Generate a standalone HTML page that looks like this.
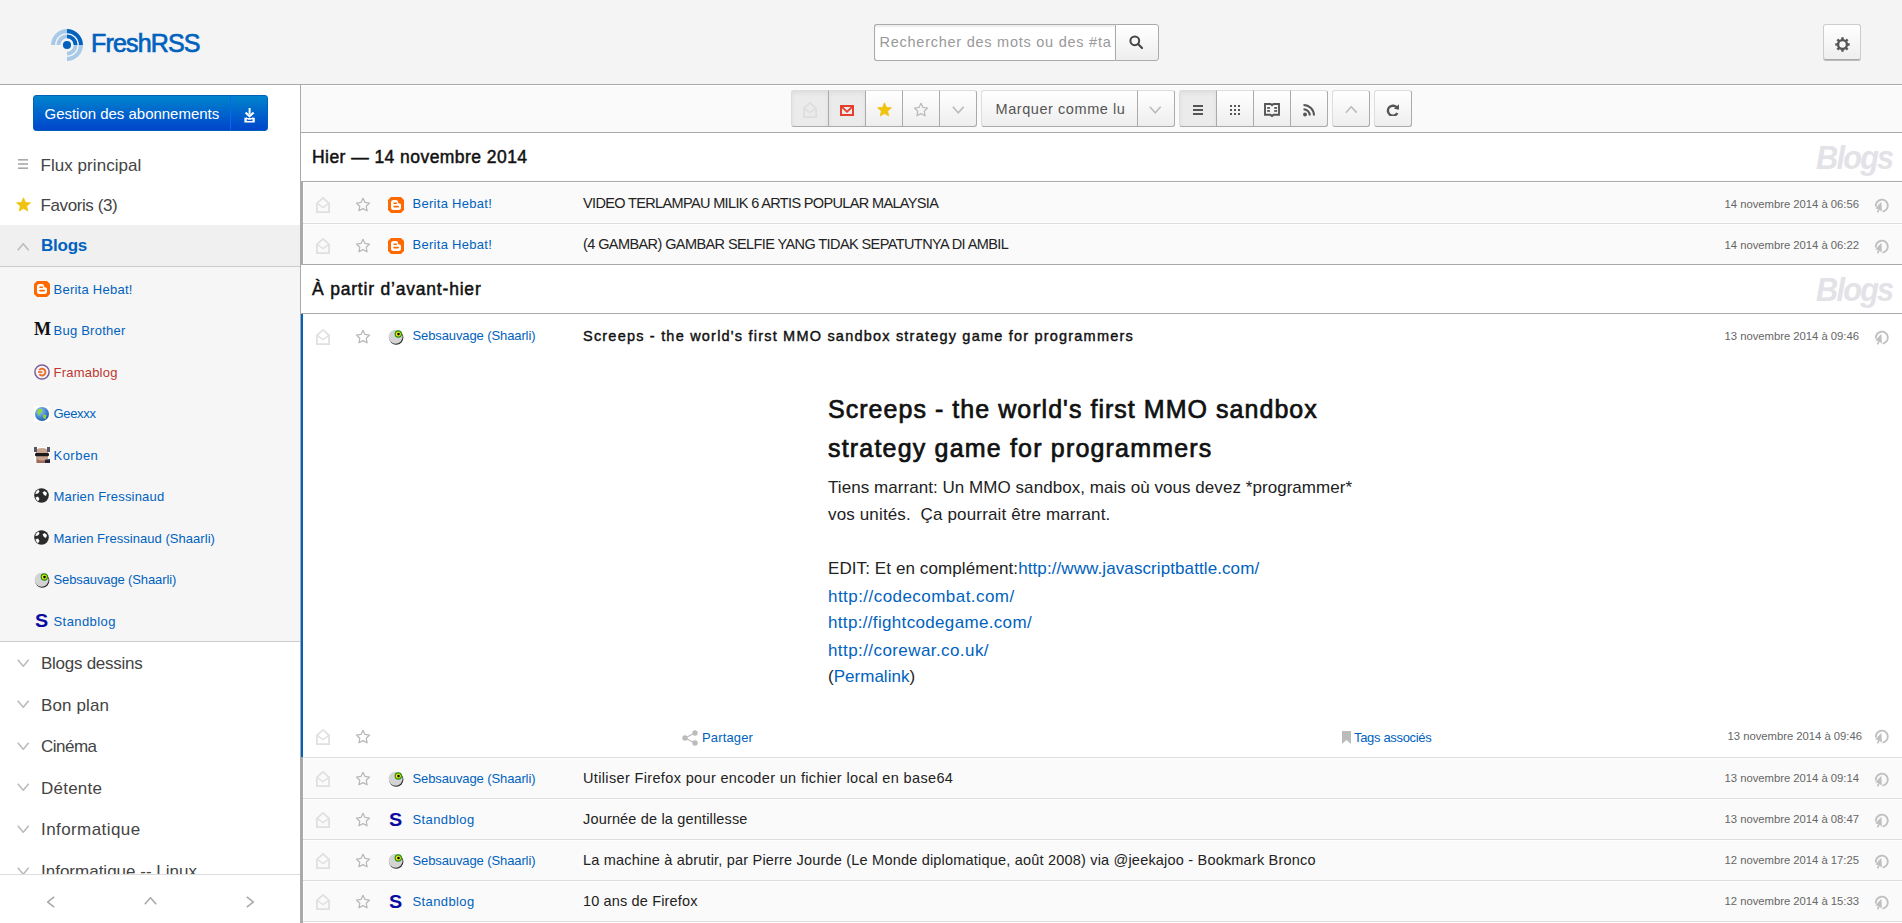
<!DOCTYPE html>
<html><head><meta charset="utf-8"><title>FreshRSS</title>
<style>
html,body{margin:0;padding:0;}
body{width:1902px;height:923px;overflow:hidden;position:relative;background:#fff;font-family:"Liberation Sans", sans-serif;}
body div, body svg{position:absolute;}
.t{white-space:pre;}
</style></head><body>
<div style="left:0px;top:0px;width:1902px;height:84px;background:#f4f4f4;"></div>
<div style="left:0px;top:84px;width:1902px;height:1px;background:#aaa;"></div>
<svg style="left:51px;top:29px;" width="32" height="32" viewBox="0 0 32 32"><circle cx="16" cy="16" r="4.1" fill="#0062be"/><path d="M7.40 16.00A8.6 8.6 0 0 1 16.00 7.40" stroke="#a9c9e9" stroke-width="3.9" fill="none"/><path d="M16.00 7.40A8.6 8.6 0 0 1 24.60 16.00" stroke="#0062be" stroke-width="3.9" fill="none"/><path d="M24.60 16.00A8.6 8.6 0 0 1 16.00 24.60" stroke="#a9c9e9" stroke-width="3.9" fill="none"/><path d="M2.10 16.00A13.9 13.9 0 0 1 16.00 2.10" stroke="#a9c9e9" stroke-width="4.1" fill="none"/><path d="M16.00 2.10A13.9 13.9 0 0 1 29.90 16.00" stroke="#0062be" stroke-width="4.1" fill="none"/><path d="M29.90 16.00A13.9 13.9 0 0 1 16.00 29.90" stroke="#a9c9e9" stroke-width="4.1" fill="none"/></svg>
<div class="t" style="left:91px;top:31.33px;font-size:25px;line-height:25px;color:#0062be;font-weight:400;letter-spacing:-0.828px;font-style:normal;-webkit-text-stroke:0.70px #0062be;">FreshRSS</div>
<div style="left:874px;top:24px;width:241px;height:37px;background:#fff;box-sizing:border-box;border:1px solid #aaa;border-right:none;border-radius:3px 0 0 3px;box-shadow:inset 0 2px 2px #eee;"></div>
<div class="t" style="left:879.5px;top:35.22px;font-size:14.5px;line-height:14.5px;color:#999;font-weight:400;letter-spacing:0.748px;font-style:normal;">Rechercher des mots ou des #ta</div>
<div style="left:1115px;top:24px;width:44px;height:37px;background:linear-gradient(#fff,#eee);box-sizing:border-box;border:1px solid #aaa;border-radius:0 3px 3px 0;"></div>
<svg style="left:1129px;top:35px;" width="14" height="14" viewBox="0 0 14 14"><circle cx="5.8" cy="5.8" r="4.4" fill="none" stroke="#444" stroke-width="2"/><path d="M9 9L13 13" stroke="#444" stroke-width="2.2" stroke-linecap="round"/></svg>
<div style="left:1823px;top:24px;width:38px;height:36px;background:linear-gradient(#fff,#eee);box-sizing:border-box;border:1px solid #ccc;border-bottom-color:#aaa;border-radius:3px;box-shadow:0 1px #bbb;"></div>
<svg style="left:1834.5px;top:36.5px;" width="15" height="15" viewBox="0 0 15 15"><circle cx="7.5" cy="7.5" r="4.4" fill="none" stroke="#555" stroke-width="2.3"/><rect x="6.25" y="0.3" width="2.5" height="3" fill="#555" transform="rotate(0 7.5 7.5)"/><rect x="6.25" y="0.3" width="2.5" height="3" fill="#555" transform="rotate(45 7.5 7.5)"/><rect x="6.25" y="0.3" width="2.5" height="3" fill="#555" transform="rotate(90 7.5 7.5)"/><rect x="6.25" y="0.3" width="2.5" height="3" fill="#555" transform="rotate(135 7.5 7.5)"/><rect x="6.25" y="0.3" width="2.5" height="3" fill="#555" transform="rotate(180 7.5 7.5)"/><rect x="6.25" y="0.3" width="2.5" height="3" fill="#555" transform="rotate(225 7.5 7.5)"/><rect x="6.25" y="0.3" width="2.5" height="3" fill="#555" transform="rotate(270 7.5 7.5)"/><rect x="6.25" y="0.3" width="2.5" height="3" fill="#555" transform="rotate(315 7.5 7.5)"/></svg>
<div style="left:0px;top:85px;width:300px;height:838px;background:#fff;"></div>
<div style="left:300px;top:85px;width:1px;height:838px;background:#aaa;"></div>
<div style="left:33px;top:95px;width:235px;height:36px;background:linear-gradient(#0084cc,#0045cc);box-sizing:border-box;border:1px solid #0062b7;border-radius:3px;"></div>
<div style="left:230px;top:96px;width:1px;height:34px;background:#0a66f0;"></div>
<div class="t" style="left:44.5px;top:106.20px;font-size:15px;line-height:15px;color:#fff;font-weight:400;letter-spacing:-0.018px;font-style:normal;">Gestion des abonnements</div>
<svg style="left:243.5px;top:107.5px;" width="11" height="15" viewBox="0 0 11 15"><rect x="4.6" y="0" width="2" height="6.5" fill="#fff"/><path d="M1.6 4.6L5.6 8.4L9.6 4.6" fill="none" stroke="#fff" stroke-width="2.1"/><path d="M0.4 9.7H1.6L2.4 9.1L3 9.9H8.2L8.8 9.1L9.6 9.7H10.8V14.5H0.4Z" fill="#fff"/><path d="M3.3 11.3V12.4H7.9V11.3" fill="none" stroke="#0857cc" stroke-width="1.2"/></svg>
<svg style="left:18px;top:159px;" width="10" height="10" viewBox="0 0 10 10"><rect x="0" y="0" width="10" height="1.6" fill="#aaa"/><rect x="0" y="4.2" width="10" height="1.6" fill="#aaa"/><rect x="0" y="8.4" width="10" height="1.6" fill="#aaa"/></svg>
<div class="t" style="left:40.5px;top:156.50px;font-size:17px;line-height:17px;color:#444;font-weight:400;letter-spacing:0.051px;font-style:normal;">Flux principal</div>
<svg style="left:15.5px;top:197px;" width="15" height="15" viewBox="0 0 15 15"><path d="M7.50 0.80L9.44 5.43L14.44 5.84L10.64 9.12L11.79 14.01L7.50 11.40L3.21 14.01L4.36 9.12L0.56 5.84L5.56 5.43Z" fill="#f0c30f" stroke="#f0c30f" stroke-width="0.8" stroke-linejoin="round"/></svg>
<div class="t" style="left:40.5px;top:197.00px;font-size:17px;line-height:17px;color:#444;font-weight:400;letter-spacing:-0.400px;font-style:normal;">Favoris (3)</div>
<div style="left:0px;top:225px;width:300px;height:41px;background:#f0f0f0;"></div>
<div style="left:0px;top:266px;width:300px;height:1px;background:#ccc;"></div>
<svg style="left:17px;top:242.5px;" width="12.5" height="8" viewBox="0 0 12.5 8"><path d="M0.8 7.2L6.25 0.8L11.7 7.2" fill="none" stroke="#bbb" stroke-width="1.6"/></svg>
<div class="t" style="left:41px;top:237.40px;font-size:17px;line-height:17px;color:#0062be;font-weight:700;letter-spacing:-0.250px;font-style:normal;">Blogs</div>
<div style="left:0px;top:267px;width:300px;height:374px;background:#f6f6f6;"></div>
<div style="left:0px;top:641px;width:300px;height:1px;background:#ccc;"></div>
<svg style="left:34px;top:281px;" width="16" height="16" viewBox="0 0 16 16"><path d="M3 0H13L16 3V13L13 16H3L0 13V3Z" fill="#ff6a00"/><path d="M3 5.5Q3 3 5.5 3H8Q10 3 10 5Q10 6.5 11.5 6.5Q13 6.5 13 8V10.5Q13 13 10.5 13H5.5Q3 13 3 10.5Z" fill="#fff"/><rect x="5.2" y="5.4" width="4" height="1.6" rx="0.8" fill="#ff6a00"/><rect x="5.2" y="8.8" width="5.8" height="1.6" rx="0.8" fill="#ff6a00"/></svg>
<div class="t" style="left:53.5px;top:282.99px;font-size:13px;line-height:13px;color:#0062be;font-weight:400;letter-spacing:0.250px;font-style:normal;">Berita Hebat!</div>
<div class="t" style="left:33.5px;top:319px;font-family:'Liberation Serif',serif;font-weight:700;font-size:19px;line-height:19px;color:#111;transform:scaleX(0.95);transform-origin:0 0">M</div>
<div class="t" style="left:53.5px;top:324.49px;font-size:13px;line-height:13px;color:#0062be;font-weight:400;letter-spacing:0.240px;font-style:normal;">Bug Brother</div>
<svg style="left:34px;top:364px;" width="16" height="16" viewBox="0 0 16 16"><circle cx="8" cy="8" r="7.1" fill="none" stroke="#7b5e9b" stroke-width="1.5"/><path d="M5.2 6.2A3.4 3.4 0 1 1 5.4 10.2" fill="none" stroke="#ea6e2e" stroke-width="2"/><rect x="4" y="7.2" width="4.4" height="1.7" fill="#ea6e2e"/></svg>
<div class="t" style="left:53.5px;top:365.99px;font-size:13px;line-height:13px;color:#bd362f;font-weight:400;letter-spacing:0.219px;font-style:normal;">Framablog</div>
<svg style="left:34px;top:406px;" width="16" height="16" viewBox="0 0 16 16"><rect width="16" height="16" fill="#fff"/><defs><radialGradient id="gg" cx="0.35" cy="0.3" r="0.8"><stop offset="0" stop-color="#8ec8ff"/><stop offset="1" stop-color="#1450a8"/></radialGradient></defs><circle cx="8" cy="8" r="7" fill="url(#gg)"/><path d="M3.5 4Q6 2 8.5 3.5L8 6L6 7.5L5 10L3.5 7Z" fill="#8fd63a"/><path d="M9 8.5L12.5 9L11.5 13L9.5 12.5Z" fill="#8fd63a"/></svg>
<div class="t" style="left:53.5px;top:407.49px;font-size:13px;line-height:13px;color:#0062be;font-weight:400;letter-spacing:-0.320px;font-style:normal;">Geexxx</div>
<svg style="left:34px;top:447px;" width="16" height="16" viewBox="0 0 16 16"><rect width="16" height="16" fill="#fff"/><path d="M2 16V5Q2 1 8 1Q14 1 14 5V16Z" fill="#c9a48f"/><rect x="1" y="6" width="14" height="3.2" rx="1.2" fill="#1a1a1a"/><path d="M0 0H3V5H0ZM13 0H16V5H13Z" fill="#556"/><path d="M3 12Q8 15 13 12V16H3Z" fill="#a06a5a"/><path d="M11 13L16 12V16H11Z" fill="#223"/></svg>
<div class="t" style="left:53.5px;top:448.99px;font-size:13px;line-height:13px;color:#0062be;font-weight:400;letter-spacing:0.480px;font-style:normal;">Korben</div>
<svg style="left:34px;top:488px;" width="15" height="15" viewBox="0 0 15 15"><circle cx="7.5" cy="7.5" r="7.3" fill="#2b2b2b"/><path d="M1.2 6Q2 3 4.5 1.6L5.5 3.5L4 5.5Z" fill="#fff"/><path d="M8.5 4.5L10.5 3L13 5L12 8L10 7Z" fill="#fff"/><path d="M1.5 9.5L4 8.5L5.5 11L4 13.2Q2 11.8 1.5 9.5Z" fill="#fff"/></svg>
<div class="t" style="left:53.5px;top:490.49px;font-size:13px;line-height:13px;color:#0062be;font-weight:400;letter-spacing:0.188px;font-style:normal;">Marien Fressinaud</div>
<svg style="left:34px;top:530px;" width="15" height="15" viewBox="0 0 15 15"><circle cx="7.5" cy="7.5" r="7.3" fill="#2b2b2b"/><path d="M1.2 6Q2 3 4.5 1.6L5.5 3.5L4 5.5Z" fill="#fff"/><path d="M8.5 4.5L10.5 3L13 5L12 8L10 7Z" fill="#fff"/><path d="M1.5 9.5L4 8.5L5.5 11L4 13.2Q2 11.8 1.5 9.5Z" fill="#fff"/></svg>
<div class="t" style="left:53.5px;top:531.99px;font-size:13px;line-height:13px;color:#0062be;font-weight:400;letter-spacing:0.038px;font-style:normal;">Marien Fressinaud (Shaarli)</div>
<svg style="left:34px;top:572px;" width="16" height="16" viewBox="0 0 16 16"><circle cx="8.2" cy="8.6" r="7.2" fill="#2a2a2a"/><circle cx="7.6" cy="7.7" r="7" fill="#d3d3d3"/><circle cx="10.3" cy="5" r="3.7" fill="#1f8f12"/><circle cx="10.3" cy="5" r="2.5" fill="#f2ec10"/><circle cx="10.5" cy="5.1" r="1.3" fill="#000"/></svg>
<div class="t" style="left:53.5px;top:573.49px;font-size:13px;line-height:13px;color:#0062be;font-weight:400;letter-spacing:-0.118px;font-style:normal;">Sebsauvage (Shaarli)</div>
<div class="t" style="left:35.2px;top:611.4px;font-weight:700;font-size:19px;line-height:19px;color:#0a0aa0;transform:scaleX(1.04);transform-origin:0 0">S</div>
<div class="t" style="left:53.5px;top:614.99px;font-size:13px;line-height:13px;color:#0062be;font-weight:400;letter-spacing:0.425px;font-style:normal;">Standblog</div>
<svg style="left:17px;top:658.5px;" width="12.5" height="8" viewBox="0 0 12.5 8"><path d="M0.8 0.8L6.25 7.2L11.7 0.8" fill="none" stroke="#bbb" stroke-width="1.6"/></svg>
<div class="t" style="left:41px;top:655.00px;font-size:17px;line-height:17px;color:#444;font-weight:400;letter-spacing:-0.263px;font-style:normal;">Blogs dessins</div>
<svg style="left:17px;top:700.1px;" width="12.5" height="8" viewBox="0 0 12.5 8"><path d="M0.8 0.8L6.25 7.2L11.7 0.8" fill="none" stroke="#bbb" stroke-width="1.6"/></svg>
<div class="t" style="left:41px;top:696.60px;font-size:17px;line-height:17px;color:#444;font-weight:400;letter-spacing:0.118px;font-style:normal;">Bon plan</div>
<svg style="left:17px;top:741.7px;" width="12.5" height="8" viewBox="0 0 12.5 8"><path d="M0.8 0.8L6.25 7.2L11.7 0.8" fill="none" stroke="#bbb" stroke-width="1.6"/></svg>
<div class="t" style="left:41px;top:738.20px;font-size:17px;line-height:17px;color:#444;font-weight:400;letter-spacing:-0.520px;font-style:normal;">Cinéma</div>
<svg style="left:17px;top:783.3px;" width="12.5" height="8" viewBox="0 0 12.5 8"><path d="M0.8 0.8L6.25 7.2L11.7 0.8" fill="none" stroke="#bbb" stroke-width="1.6"/></svg>
<div class="t" style="left:41px;top:779.80px;font-size:17px;line-height:17px;color:#444;font-weight:400;letter-spacing:0.234px;font-style:normal;">Détente</div>
<svg style="left:17px;top:824.9px;" width="12.5" height="8" viewBox="0 0 12.5 8"><path d="M0.8 0.8L6.25 7.2L11.7 0.8" fill="none" stroke="#bbb" stroke-width="1.6"/></svg>
<div class="t" style="left:41px;top:821.40px;font-size:17px;line-height:17px;color:#444;font-weight:400;letter-spacing:0.420px;font-style:normal;">Informatique</div>
<svg style="left:17px;top:866.5px;" width="12.5" height="8" viewBox="0 0 12.5 8"><path d="M0.8 0.8L6.25 7.2L11.7 0.8" fill="none" stroke="#bbb" stroke-width="1.6"/></svg>
<div class="t" style="left:41px;top:863.00px;font-size:17px;line-height:17px;color:#444;font-weight:400;letter-spacing:0.000px;font-style:normal;">Informatique -- Linux</div>
<div style="left:0px;top:874px;width:300px;height:49px;background:#fff;"></div>
<div style="left:0px;top:874px;width:300px;height:1px;background:#ddd;"></div>
<svg style="left:46.5px;top:895.5px;" width="8" height="12" viewBox="0 0 8 12"><path d="M7.2 0.8L0.8 6.0L7.2 11.2" fill="none" stroke="#aaa" stroke-width="1.6"/></svg>
<svg style="left:143.5px;top:897px;" width="13" height="8" viewBox="0 0 13 8"><path d="M0.8 7.2L6.5 0.8L12.2 7.2" fill="none" stroke="#aaa" stroke-width="1.6"/></svg>
<svg style="left:246px;top:895.5px;" width="8" height="12" viewBox="0 0 8 12"><path d="M0.8 0.8L7.2 6.0L0.8 11.2" fill="none" stroke="#aaa" stroke-width="1.6"/></svg>
<div style="left:301px;top:85px;width:1601px;height:838px;background:#fff;"></div>
<div style="left:301px;top:85px;width:1601px;height:1px;background:#fff;"></div>
<div style="left:301px;top:86px;width:1601px;height:46px;background:#fafafa;"></div>
<div style="left:301px;top:132px;width:1601px;height:1px;background:#aaa;"></div>
<div style="left:791px;top:90px;width:38px;height:37px;background:#ebebeb;box-sizing:border-box;border:1px solid #ddd;border-right-color:#aaa;border-bottom-color:#aaa;border-radius:3px 0 0 3px;box-shadow:inset 0 2px 4px #ddd;"></div>
<div style="left:829px;top:90px;width:37px;height:37px;background:#ebebeb;box-sizing:border-box;border:1px solid #ddd;border-left:none;border-right-color:#aaa;border-bottom-color:#aaa;box-shadow:inset 0 2px 4px #ddd;"></div>
<div style="left:866px;top:90px;width:37px;height:37px;background:linear-gradient(#fff,#eee);box-sizing:border-box;border:1px solid #ddd;border-left:none;border-right-color:#aaa;border-bottom-color:#aaa;"></div>
<div style="left:903px;top:90px;width:37px;height:37px;background:linear-gradient(#fff,#eee);box-sizing:border-box;border:1px solid #ddd;border-left:none;border-right-color:#aaa;border-bottom-color:#aaa;"></div>
<div style="left:940px;top:90px;width:37px;height:37px;background:linear-gradient(#fff,#eee);box-sizing:border-box;border:1px solid #ddd;border-left:none;border-right-color:#aaa;border-bottom-color:#aaa;border-radius:0 3px 3px 0;"></div>
<svg style="left:803px;top:102px;" width="14" height="16" viewBox="0 0 14 16"><path d="M0.9 15.1V6.3L7 0.9L13.1 6.3V15.1Z" fill="none" stroke="#ddd" stroke-width="1.6" stroke-linejoin="miter"/><path d="M1.8 6.9L7 10.6L12.2 6.9" fill="none" stroke="#ddd" stroke-width="1.3"/></svg>
<svg style="left:840px;top:105px;" width="14" height="11" viewBox="0 0 14 11"><rect x="1" y="1" width="12" height="9" fill="none" stroke="#e6402f" stroke-width="2"/><path d="M1.5 1.5L7 6.8L12.5 1.5" fill="none" stroke="#e6402f" stroke-width="1.8"/></svg>
<svg style="left:876.5px;top:102px;" width="15" height="15" viewBox="0 0 15 15"><path d="M7.50 0.80L9.44 5.43L14.44 5.84L10.64 9.12L11.79 14.01L7.50 11.40L3.21 14.01L4.36 9.12L0.56 5.84L5.56 5.43Z" fill="#f0c30f" stroke="#f0c30f" stroke-width="0.8" stroke-linejoin="round"/></svg>
<svg style="left:913px;top:101.5px;" width="16" height="16" viewBox="0 0 16 16"><path d="M8.00 1.30L10.00 5.45L14.56 6.07L11.23 9.25L12.06 13.78L8.00 11.60L3.94 13.78L4.77 9.25L1.44 6.07L6.00 5.45Z" fill="none" stroke="#bbb" stroke-width="1.25" stroke-linejoin="round"/></svg>
<svg style="left:951.5px;top:106px;" width="12.5" height="7.5" viewBox="0 0 12.5 7.5"><path d="M0.8 0.8L6.25 6.7L11.7 0.8" fill="none" stroke="#bbb" stroke-width="1.6"/></svg>
<div style="left:981px;top:90px;width:157px;height:37px;background:linear-gradient(#fff,#eee);box-sizing:border-box;border:1px solid #ddd;border-right-color:#aaa;border-bottom-color:#aaa;border-radius:3px 0 0 3px;"></div>
<div style="left:1138px;top:90px;width:37px;height:37px;background:linear-gradient(#fff,#eee);box-sizing:border-box;border:1px solid #ddd;border-left:none;border-right-color:#aaa;border-bottom-color:#aaa;border-radius:0 3px 3px 0;"></div>
<div class="t" style="left:995.5px;top:102.22px;font-size:14.5px;line-height:14.5px;color:#555;font-weight:400;letter-spacing:0.566px;font-style:normal;">Marquer comme lu</div>
<svg style="left:1149px;top:106px;" width="12.5" height="7.5" viewBox="0 0 12.5 7.5"><path d="M0.8 0.8L6.25 6.7L11.7 0.8" fill="none" stroke="#bbb" stroke-width="1.6"/></svg>
<div style="left:1179px;top:90px;width:38px;height:37px;background:#ebebeb;box-sizing:border-box;border:1px solid #ddd;border-right-color:#aaa;border-bottom-color:#aaa;border-radius:3px 0 0 3px;box-shadow:inset 0 2px 4px #ddd;"></div>
<div style="left:1217px;top:90px;width:37px;height:37px;background:linear-gradient(#fff,#eee);box-sizing:border-box;border:1px solid #ddd;border-left:none;border-right-color:#aaa;border-bottom-color:#aaa;"></div>
<div style="left:1254px;top:90px;width:37px;height:37px;background:linear-gradient(#fff,#eee);box-sizing:border-box;border:1px solid #ddd;border-left:none;border-right-color:#aaa;border-bottom-color:#aaa;"></div>
<div style="left:1291px;top:90px;width:37px;height:37px;background:linear-gradient(#fff,#eee);box-sizing:border-box;border:1px solid #ddd;border-left:none;border-right-color:#aaa;border-bottom-color:#aaa;border-radius:0 3px 3px 0;"></div>
<svg style="left:1193px;top:105px;" width="10" height="10" viewBox="0 0 10 10"><rect x="0" y="0" width="10" height="2" fill="#555"/><rect x="0" y="4" width="10" height="2" fill="#555"/><rect x="0" y="8" width="10" height="2" fill="#555"/></svg>
<svg style="left:1230px;top:105px;" width="10" height="10" viewBox="0 0 10 10"><rect x="0" y="0" width="2" height="2" fill="#555"/><rect x="0" y="4" width="2" height="2" fill="#555"/><rect x="0" y="8" width="2" height="2" fill="#555"/><rect x="4" y="0" width="2" height="2" fill="#555"/><rect x="4" y="4" width="2" height="2" fill="#555"/><rect x="4" y="8" width="2" height="2" fill="#555"/><rect x="8" y="0" width="2" height="2" fill="#555"/><rect x="8" y="4" width="2" height="2" fill="#555"/><rect x="8" y="8" width="2" height="2" fill="#555"/></svg>
<svg style="left:1264px;top:103px;" width="16" height="14" viewBox="0 0 16 14"><path d="M1 1H6.6L8 2.3L9.4 1H15V11.8H9.4L8 13.2L6.6 11.8H1Z" fill="none" stroke="#555" stroke-width="1.9"/><rect x="3.1" y="4.1" width="2.9" height="1.7" fill="#555"/><rect x="10.2" y="4.1" width="2.9" height="1.7" fill="#555"/><rect x="3.1" y="7.1" width="2.9" height="1.7" fill="#555"/><rect x="10.2" y="7.1" width="2.9" height="1.7" fill="#555"/></svg>
<svg style="left:1303px;top:104px;" width="12" height="13" viewBox="0 0 12 13"><circle cx="2" cy="10.5" r="1.9" fill="#555"/><path d="M0.5 5.2A6.3 6.3 0 0 1 6.8 11.5" fill="none" stroke="#555" stroke-width="2"/><path d="M0.5 1A10.5 10.5 0 0 1 11 11.5" fill="none" stroke="#555" stroke-width="2"/></svg>
<div style="left:1332px;top:90px;width:38px;height:37px;background:linear-gradient(#fff,#eee);box-sizing:border-box;border:1px solid #ddd;border-right-color:#aaa;border-bottom-color:#aaa;border-radius:3px;"></div>
<svg style="left:1344.5px;top:106px;" width="12.5" height="7.5" viewBox="0 0 12.5 7.5"><path d="M0.8 6.7L6.25 0.8L11.7 6.7" fill="none" stroke="#bbb" stroke-width="1.6"/></svg>
<div style="left:1374px;top:90px;width:38px;height:37px;background:linear-gradient(#fff,#eee);box-sizing:border-box;border:1px solid #ddd;border-right-color:#aaa;border-bottom-color:#aaa;border-radius:3px;"></div>
<svg style="left:1386px;top:104px;" width="13" height="12" viewBox="0 0 13 12"><path d="M11.2 4.2A5 5 0 1 0 11.3 9" fill="none" stroke="#555" stroke-width="2.4"/><path d="M8 4.8L13 0.3V5.8Z" fill="#555"/></svg>
<div style="left:301px;top:133px;width:1601px;height:48px;background:#fff;"></div>
<div class="t" style="left:312px;top:149.18px;font-size:17.5px;line-height:17.5px;color:#111;font-weight:400;letter-spacing:0.446px;font-style:normal;-webkit-text-stroke:0.49px #111;">Hier — 14 novembre 2014</div>
<div class="t" style="left:1816px;top:140.86px;font-size:33px;line-height:33px;color:#e2e2e7;font-weight:700;letter-spacing:-1.900px;font-style:italic;transform:scaleX(0.93);transform-origin:0 0;">Blogs</div>
<div style="left:301px;top:181px;width:1601px;height:1px;background:#aaa;"></div>
<div style="left:301px;top:182px;width:2px;height:82px;background:#aaa;"></div>
<div style="left:303px;top:182px;width:1599px;height:1px;background:#fff;"></div>
<div style="left:303px;top:183px;width:1599px;height:39px;background:#fafafa;"></div>
<div style="left:303px;top:183px;width:1px;height:39px;background:#fff;"></div>
<svg style="left:316px;top:197px;" width="14" height="16" viewBox="0 0 14 16"><path d="M0.9 15.1V6.3L7 0.9L13.1 6.3V15.1Z" fill="none" stroke="#e0e0e0" stroke-width="1.8" stroke-linejoin="miter"/><path d="M1.8 6.9L7 10.6L12.2 6.9" fill="none" stroke="#e0e0e0" stroke-width="1.3"/></svg>
<svg style="left:355px;top:197px;" width="16" height="16" viewBox="0 0 16 16"><path d="M8.00 1.30L10.00 5.45L14.56 6.07L11.23 9.25L12.06 13.78L8.00 11.60L3.94 13.78L4.77 9.25L1.44 6.07L6.00 5.45Z" fill="none" stroke="#b8b8b8" stroke-width="1.25" stroke-linejoin="round"/></svg>
<svg style="left:388px;top:197px;" width="16" height="16" viewBox="0 0 16 16"><path d="M3 0H13L16 3V13L13 16H3L0 13V3Z" fill="#ff6a00"/><path d="M3 5.5Q3 3 5.5 3H8Q10 3 10 5Q10 6.5 11.5 6.5Q13 6.5 13 8V10.5Q13 13 10.5 13H5.5Q3 13 3 10.5Z" fill="#fff"/><rect x="5.2" y="5.4" width="4" height="1.6" rx="0.8" fill="#ff6a00"/><rect x="5.2" y="8.8" width="5.8" height="1.6" rx="0.8" fill="#ff6a00"/></svg>
<div class="t" style="left:412.5px;top:196.99px;font-size:13px;line-height:13px;color:#0062be;font-weight:400;letter-spacing:0.286px;font-style:normal;">Berita Hebat!</div>
<div class="t" style="left:583px;top:196.22px;font-size:14.5px;line-height:14.5px;color:#222;font-weight:400;letter-spacing:-0.644px;font-style:normal;">VIDEO TERLAMPAU MILIK 6 ARTIS POPULAR MALAYSIA</div>
<div class="t" style="right:43px;top:198.73px;font-size:11.3px;line-height:11.3px;color:#666;font-weight:400;letter-spacing:-0.027px;font-style:normal;">14 novembre 2014 à 06:56</div>
<svg style="left:1874px;top:198px;" width="16" height="16" viewBox="0 0 16 16"><path d="M1.9 8.6A6 6 0 1 1 8.6 13.6" fill="none" stroke="#c0c0c0" stroke-width="1.9"/><path d="M7.4 3.8L7.9 13.8L5.7 11.8L4.3 14.7L2.8 13.9L4.2 11L1.3 10.5Z" fill="#c0c0c0"/></svg>
<div style="left:303px;top:223px;width:1599px;height:1px;background:#ddd;"></div>
<div style="left:303px;top:224px;width:1599px;height:1px;background:#fff;"></div>
<div style="left:303px;top:225px;width:1599px;height:39px;background:#fafafa;"></div>
<div style="left:303px;top:225px;width:1px;height:39px;background:#fff;"></div>
<svg style="left:316px;top:238px;" width="14" height="16" viewBox="0 0 14 16"><path d="M0.9 15.1V6.3L7 0.9L13.1 6.3V15.1Z" fill="none" stroke="#e0e0e0" stroke-width="1.8" stroke-linejoin="miter"/><path d="M1.8 6.9L7 10.6L12.2 6.9" fill="none" stroke="#e0e0e0" stroke-width="1.3"/></svg>
<svg style="left:355px;top:238px;" width="16" height="16" viewBox="0 0 16 16"><path d="M8.00 1.30L10.00 5.45L14.56 6.07L11.23 9.25L12.06 13.78L8.00 11.60L3.94 13.78L4.77 9.25L1.44 6.07L6.00 5.45Z" fill="none" stroke="#b8b8b8" stroke-width="1.25" stroke-linejoin="round"/></svg>
<svg style="left:388px;top:238px;" width="16" height="16" viewBox="0 0 16 16"><path d="M3 0H13L16 3V13L13 16H3L0 13V3Z" fill="#ff6a00"/><path d="M3 5.5Q3 3 5.5 3H8Q10 3 10 5Q10 6.5 11.5 6.5Q13 6.5 13 8V10.5Q13 13 10.5 13H5.5Q3 13 3 10.5Z" fill="#fff"/><rect x="5.2" y="5.4" width="4" height="1.6" rx="0.8" fill="#ff6a00"/><rect x="5.2" y="8.8" width="5.8" height="1.6" rx="0.8" fill="#ff6a00"/></svg>
<div class="t" style="left:412.5px;top:237.99px;font-size:13px;line-height:13px;color:#0062be;font-weight:400;letter-spacing:0.286px;font-style:normal;">Berita Hebat!</div>
<div class="t" style="left:583px;top:237.22px;font-size:14.5px;line-height:14.5px;color:#222;font-weight:400;letter-spacing:-0.589px;font-style:normal;">(4 GAMBAR) GAMBAR SELFIE YANG TIDAK SEPATUTNYA DI AMBIL</div>
<div class="t" style="right:43px;top:239.73px;font-size:11.3px;line-height:11.3px;color:#666;font-weight:400;letter-spacing:-0.027px;font-style:normal;">14 novembre 2014 à 06:22</div>
<svg style="left:1874px;top:239px;" width="16" height="16" viewBox="0 0 16 16"><path d="M1.9 8.6A6 6 0 1 1 8.6 13.6" fill="none" stroke="#c0c0c0" stroke-width="1.9"/><path d="M7.4 3.8L7.9 13.8L5.7 11.8L4.3 14.7L2.8 13.9L4.2 11L1.3 10.5Z" fill="#c0c0c0"/></svg>
<div style="left:301px;top:264px;width:1601px;height:1px;background:#aaa;"></div>
<div style="left:301px;top:265px;width:1601px;height:48px;background:#fff;"></div>
<div class="t" style="left:312px;top:281.18px;font-size:17.5px;line-height:17.5px;color:#111;font-weight:400;letter-spacing:0.800px;font-style:normal;-webkit-text-stroke:0.49px #111;">À partir d’avant-hier</div>
<div class="t" style="left:1816px;top:272.86px;font-size:33px;line-height:33px;color:#e2e2e7;font-weight:700;letter-spacing:-1.900px;font-style:italic;transform:scaleX(0.93);transform-origin:0 0;">Blogs</div>
<div style="left:301px;top:313px;width:1601px;height:1px;background:#aaa;"></div>
<div style="left:301px;top:314px;width:2px;height:443px;background:#0062be;"></div>
<div style="left:303px;top:314px;width:1599px;height:443px;background:#fff;"></div>
<svg style="left:316px;top:329px;" width="14" height="16" viewBox="0 0 14 16"><path d="M0.9 15.1V6.3L7 0.9L13.1 6.3V15.1Z" fill="none" stroke="#e0e0e0" stroke-width="1.8" stroke-linejoin="miter"/><path d="M1.8 6.9L7 10.6L12.2 6.9" fill="none" stroke="#e0e0e0" stroke-width="1.3"/></svg>
<svg style="left:355px;top:329px;" width="16" height="16" viewBox="0 0 16 16"><path d="M8.00 1.30L10.00 5.45L14.56 6.07L11.23 9.25L12.06 13.78L8.00 11.60L3.94 13.78L4.77 9.25L1.44 6.07L6.00 5.45Z" fill="none" stroke="#b8b8b8" stroke-width="1.25" stroke-linejoin="round"/></svg>
<svg style="left:388px;top:329px;" width="16" height="16" viewBox="0 0 16 16"><circle cx="8.2" cy="8.6" r="7.2" fill="#2a2a2a"/><circle cx="7.6" cy="7.7" r="7" fill="#d3d3d3"/><circle cx="10.3" cy="5" r="3.7" fill="#1f8f12"/><circle cx="10.3" cy="5" r="2.5" fill="#f2ec10"/><circle cx="10.5" cy="5.1" r="1.3" fill="#000"/></svg>
<div class="t" style="left:412.5px;top:328.99px;font-size:13px;line-height:13px;color:#0062be;font-weight:400;letter-spacing:-0.106px;font-style:normal;">Sebsauvage (Shaarli)</div>
<div class="t" style="left:583px;top:328.72px;font-size:14.5px;line-height:14.5px;color:#111;font-weight:400;letter-spacing:1.206px;font-style:normal;-webkit-text-stroke:0.41px #111;">Screeps - the world's first MMO sandbox strategy game for programmers</div>
<div class="t" style="right:43px;top:330.73px;font-size:11.3px;line-height:11.3px;color:#666;font-weight:400;letter-spacing:-0.027px;font-style:normal;">13 novembre 2014 à 09:46</div>
<svg style="left:1874px;top:330px;" width="16" height="16" viewBox="0 0 16 16"><path d="M1.9 8.6A6 6 0 1 1 8.6 13.6" fill="none" stroke="#c0c0c0" stroke-width="1.9"/><path d="M7.4 3.8L7.9 13.8L5.7 11.8L4.3 14.7L2.8 13.9L4.2 11L1.3 10.5Z" fill="#c0c0c0"/></svg>
<div class="t" style="left:828px;top:396.73px;font-size:25px;line-height:25px;color:#111;font-weight:400;letter-spacing:1.037px;font-style:normal;-webkit-text-stroke:0.70px #111;">Screeps - the world's first MMO sandbox</div>
<div class="t" style="left:828px;top:435.63px;font-size:25px;line-height:25px;color:#111;font-weight:400;letter-spacing:1.186px;font-style:normal;-webkit-text-stroke:0.70px #111;">strategy game for programmers</div>
<div class="t" style="left:828px;top:479.00px;font-size:17px;line-height:17px;color:#222;font-weight:400;letter-spacing:0.053px;font-style:normal;">Tiens marrant: Un MMO sandbox, mais où vous devez *programmer*</div>
<div class="t" style="left:828px;top:505.80px;font-size:17px;line-height:17px;color:#222;font-weight:400;letter-spacing:0.147px;font-style:normal;">vos unités.  Ça pourrait être marrant.</div>
<div class="t" style="left:828px;top:560.00px;font-size:17px;line-height:17px;color:#222;font-weight:400;letter-spacing:0.093px;font-style:normal;">EDIT: Et en complément:<span style="color:#0062be">http://www.javascriptbattle.com/</span></div>
<div class="t" style="left:828px;top:587.60px;font-size:17px;line-height:17px;color:#0062be;font-weight:400;letter-spacing:0.452px;font-style:normal;">http://codecombat.com/</div>
<div class="t" style="left:828px;top:614.40px;font-size:17px;line-height:17px;color:#0062be;font-weight:400;letter-spacing:0.333px;font-style:normal;">http://fightcodegame.com/</div>
<div class="t" style="left:828px;top:641.50px;font-size:17px;line-height:17px;color:#0062be;font-weight:400;letter-spacing:0.420px;font-style:normal;">http://corewar.co.uk/</div>
<div class="t" style="left:828px;top:668.30px;font-size:17px;line-height:17px;color:#222;font-weight:400;letter-spacing:0.020px;font-style:normal;">(<span style="color:#0062be">Permalink</span>)</div>
<svg style="left:316px;top:729px;" width="14" height="16" viewBox="0 0 14 16"><path d="M0.9 15.1V6.3L7 0.9L13.1 6.3V15.1Z" fill="none" stroke="#e0e0e0" stroke-width="1.8" stroke-linejoin="miter"/><path d="M1.8 6.9L7 10.6L12.2 6.9" fill="none" stroke="#e0e0e0" stroke-width="1.3"/></svg>
<svg style="left:355px;top:729px;" width="16" height="16" viewBox="0 0 16 16"><path d="M8.00 1.30L10.00 5.45L14.56 6.07L11.23 9.25L12.06 13.78L8.00 11.60L3.94 13.78L4.77 9.25L1.44 6.07L6.00 5.45Z" fill="none" stroke="#b8b8b8" stroke-width="1.25" stroke-linejoin="round"/></svg>
<svg style="left:682px;top:730px;" width="16" height="16" viewBox="0 0 16 16"><circle cx="3" cy="8" r="2.7" fill="#bbb"/><circle cx="13" cy="3" r="2.7" fill="#bbb"/><circle cx="13" cy="13" r="2.7" fill="#bbb"/><path d="M3 8L13 3M3 8L13 13" stroke="#bbb" stroke-width="1.3"/></svg>
<div class="t" style="left:702px;top:731.29px;font-size:13px;line-height:13px;color:#0062be;font-weight:400;letter-spacing:0.143px;font-style:normal;">Partager</div>
<svg style="left:1342px;top:731px;" width="9" height="13" viewBox="0 0 9 13"><path d="M0 0H9V13L4.5 9L0 13Z" fill="#bbb"/></svg>
<div class="t" style="left:1354px;top:731.29px;font-size:13px;line-height:13px;color:#0062be;font-weight:400;letter-spacing:-0.333px;font-style:normal;">Tags associés</div>
<div class="t" style="right:40px;top:731.43px;font-size:11.3px;line-height:11.3px;color:#666;font-weight:400;letter-spacing:-0.027px;font-style:normal;">13 novembre 2014 à 09:46</div>
<svg style="left:1874px;top:729px;" width="16" height="16" viewBox="0 0 16 16"><path d="M1.9 8.6A6 6 0 1 1 8.6 13.6" fill="none" stroke="#c0c0c0" stroke-width="1.9"/><path d="M7.4 3.8L7.9 13.8L5.7 11.8L4.3 14.7L2.8 13.9L4.2 11L1.3 10.5Z" fill="#c0c0c0"/></svg>
<div style="left:303px;top:757px;width:1599px;height:1px;background:#ddd;"></div>
<div style="left:301px;top:757px;width:2px;height:166px;background:#aaa;"></div>
<div style="left:303px;top:758px;width:1599px;height:1px;background:#fff;"></div>
<div style="left:303px;top:759px;width:1599px;height:39px;background:#fafafa;"></div>
<div style="left:303px;top:759px;width:1px;height:39px;background:#fff;"></div>
<svg style="left:316px;top:771px;" width="14" height="16" viewBox="0 0 14 16"><path d="M0.9 15.1V6.3L7 0.9L13.1 6.3V15.1Z" fill="none" stroke="#e0e0e0" stroke-width="1.8" stroke-linejoin="miter"/><path d="M1.8 6.9L7 10.6L12.2 6.9" fill="none" stroke="#e0e0e0" stroke-width="1.3"/></svg>
<svg style="left:355px;top:771px;" width="16" height="16" viewBox="0 0 16 16"><path d="M8.00 1.30L10.00 5.45L14.56 6.07L11.23 9.25L12.06 13.78L8.00 11.60L3.94 13.78L4.77 9.25L1.44 6.07L6.00 5.45Z" fill="none" stroke="#b8b8b8" stroke-width="1.25" stroke-linejoin="round"/></svg>
<svg style="left:388px;top:771px;" width="16" height="16" viewBox="0 0 16 16"><circle cx="8.2" cy="8.6" r="7.2" fill="#2a2a2a"/><circle cx="7.6" cy="7.7" r="7" fill="#d3d3d3"/><circle cx="10.3" cy="5" r="3.7" fill="#1f8f12"/><circle cx="10.3" cy="5" r="2.5" fill="#f2ec10"/><circle cx="10.5" cy="5.1" r="1.3" fill="#000"/></svg>
<div class="t" style="left:412.5px;top:771.99px;font-size:13px;line-height:13px;color:#0062be;font-weight:400;letter-spacing:-0.106px;font-style:normal;">Sebsauvage (Shaarli)</div>
<div class="t" style="left:583px;top:771.22px;font-size:14.5px;line-height:14.5px;color:#222;font-weight:400;letter-spacing:0.351px;font-style:normal;">Utiliser Firefox pour encoder un fichier local en base64</div>
<div class="t" style="right:43px;top:772.93px;font-size:11.3px;line-height:11.3px;color:#666;font-weight:400;letter-spacing:-0.027px;font-style:normal;">13 novembre 2014 à 09:14</div>
<svg style="left:1874px;top:772px;" width="16" height="16" viewBox="0 0 16 16"><path d="M1.9 8.6A6 6 0 1 1 8.6 13.6" fill="none" stroke="#c0c0c0" stroke-width="1.9"/><path d="M7.4 3.8L7.9 13.8L5.7 11.8L4.3 14.7L2.8 13.9L4.2 11L1.3 10.5Z" fill="#c0c0c0"/></svg>
<div style="left:303px;top:798px;width:1599px;height:1px;background:#ddd;"></div>
<div style="left:303px;top:799px;width:1599px;height:1px;background:#fff;"></div>
<div style="left:303px;top:800px;width:1599px;height:39px;background:#fafafa;"></div>
<div style="left:303px;top:800px;width:1px;height:39px;background:#fff;"></div>
<svg style="left:316px;top:812px;" width="14" height="16" viewBox="0 0 14 16"><path d="M0.9 15.1V6.3L7 0.9L13.1 6.3V15.1Z" fill="none" stroke="#e0e0e0" stroke-width="1.8" stroke-linejoin="miter"/><path d="M1.8 6.9L7 10.6L12.2 6.9" fill="none" stroke="#e0e0e0" stroke-width="1.3"/></svg>
<svg style="left:355px;top:812px;" width="16" height="16" viewBox="0 0 16 16"><path d="M8.00 1.30L10.00 5.45L14.56 6.07L11.23 9.25L12.06 13.78L8.00 11.60L3.94 13.78L4.77 9.25L1.44 6.07L6.00 5.45Z" fill="none" stroke="#b8b8b8" stroke-width="1.25" stroke-linejoin="round"/></svg>
<div class="t" style="left:389.2px;top:810.4px;font-weight:700;font-size:19px;line-height:19px;color:#0a0aa0;transform:scaleX(1.04);transform-origin:0 0">S</div>
<div class="t" style="left:412.5px;top:812.99px;font-size:13px;line-height:13px;color:#0062be;font-weight:400;letter-spacing:0.394px;font-style:normal;">Standblog</div>
<div class="t" style="left:583px;top:812.22px;font-size:14.5px;line-height:14.5px;color:#222;font-weight:400;letter-spacing:0.167px;font-style:normal;">Journée de la gentillesse</div>
<div class="t" style="right:43px;top:813.93px;font-size:11.3px;line-height:11.3px;color:#666;font-weight:400;letter-spacing:-0.027px;font-style:normal;">13 novembre 2014 à 08:47</div>
<svg style="left:1874px;top:813px;" width="16" height="16" viewBox="0 0 16 16"><path d="M1.9 8.6A6 6 0 1 1 8.6 13.6" fill="none" stroke="#c0c0c0" stroke-width="1.9"/><path d="M7.4 3.8L7.9 13.8L5.7 11.8L4.3 14.7L2.8 13.9L4.2 11L1.3 10.5Z" fill="#c0c0c0"/></svg>
<div style="left:303px;top:839px;width:1599px;height:1px;background:#ddd;"></div>
<div style="left:303px;top:840px;width:1599px;height:1px;background:#fff;"></div>
<div style="left:303px;top:841px;width:1599px;height:39px;background:#fafafa;"></div>
<div style="left:303px;top:841px;width:1px;height:39px;background:#fff;"></div>
<svg style="left:316px;top:853px;" width="14" height="16" viewBox="0 0 14 16"><path d="M0.9 15.1V6.3L7 0.9L13.1 6.3V15.1Z" fill="none" stroke="#e0e0e0" stroke-width="1.8" stroke-linejoin="miter"/><path d="M1.8 6.9L7 10.6L12.2 6.9" fill="none" stroke="#e0e0e0" stroke-width="1.3"/></svg>
<svg style="left:355px;top:853px;" width="16" height="16" viewBox="0 0 16 16"><path d="M8.00 1.30L10.00 5.45L14.56 6.07L11.23 9.25L12.06 13.78L8.00 11.60L3.94 13.78L4.77 9.25L1.44 6.07L6.00 5.45Z" fill="none" stroke="#b8b8b8" stroke-width="1.25" stroke-linejoin="round"/></svg>
<svg style="left:388px;top:853px;" width="16" height="16" viewBox="0 0 16 16"><circle cx="8.2" cy="8.6" r="7.2" fill="#2a2a2a"/><circle cx="7.6" cy="7.7" r="7" fill="#d3d3d3"/><circle cx="10.3" cy="5" r="3.7" fill="#1f8f12"/><circle cx="10.3" cy="5" r="2.5" fill="#f2ec10"/><circle cx="10.5" cy="5.1" r="1.3" fill="#000"/></svg>
<div class="t" style="left:412.5px;top:853.99px;font-size:13px;line-height:13px;color:#0062be;font-weight:400;letter-spacing:-0.106px;font-style:normal;">Sebsauvage (Shaarli)</div>
<div class="t" style="left:583px;top:853.22px;font-size:14.5px;line-height:14.5px;color:#222;font-weight:400;letter-spacing:0.196px;font-style:normal;">La machine à abrutir, par Pierre Jourde (Le Monde diplomatique, août 2008) via @jeekajoo - Bookmark Bronco</div>
<div class="t" style="right:43px;top:854.93px;font-size:11.3px;line-height:11.3px;color:#666;font-weight:400;letter-spacing:-0.027px;font-style:normal;">12 novembre 2014 à 17:25</div>
<svg style="left:1874px;top:854px;" width="16" height="16" viewBox="0 0 16 16"><path d="M1.9 8.6A6 6 0 1 1 8.6 13.6" fill="none" stroke="#c0c0c0" stroke-width="1.9"/><path d="M7.4 3.8L7.9 13.8L5.7 11.8L4.3 14.7L2.8 13.9L4.2 11L1.3 10.5Z" fill="#c0c0c0"/></svg>
<div style="left:303px;top:880px;width:1599px;height:1px;background:#ddd;"></div>
<div style="left:303px;top:881px;width:1599px;height:1px;background:#fff;"></div>
<div style="left:303px;top:882px;width:1599px;height:39px;background:#fafafa;"></div>
<div style="left:303px;top:882px;width:1px;height:39px;background:#fff;"></div>
<svg style="left:316px;top:894px;" width="14" height="16" viewBox="0 0 14 16"><path d="M0.9 15.1V6.3L7 0.9L13.1 6.3V15.1Z" fill="none" stroke="#e0e0e0" stroke-width="1.8" stroke-linejoin="miter"/><path d="M1.8 6.9L7 10.6L12.2 6.9" fill="none" stroke="#e0e0e0" stroke-width="1.3"/></svg>
<svg style="left:355px;top:894px;" width="16" height="16" viewBox="0 0 16 16"><path d="M8.00 1.30L10.00 5.45L14.56 6.07L11.23 9.25L12.06 13.78L8.00 11.60L3.94 13.78L4.77 9.25L1.44 6.07L6.00 5.45Z" fill="none" stroke="#b8b8b8" stroke-width="1.25" stroke-linejoin="round"/></svg>
<div class="t" style="left:389.2px;top:892.4px;font-weight:700;font-size:19px;line-height:19px;color:#0a0aa0;transform:scaleX(1.04);transform-origin:0 0">S</div>
<div class="t" style="left:412.5px;top:894.99px;font-size:13px;line-height:13px;color:#0062be;font-weight:400;letter-spacing:0.394px;font-style:normal;">Standblog</div>
<div class="t" style="left:583px;top:894.22px;font-size:14.5px;line-height:14.5px;color:#222;font-weight:400;letter-spacing:0.149px;font-style:normal;">10 ans de Firefox</div>
<div class="t" style="right:43px;top:895.93px;font-size:11.3px;line-height:11.3px;color:#666;font-weight:400;letter-spacing:-0.027px;font-style:normal;">12 novembre 2014 à 15:33</div>
<svg style="left:1874px;top:895px;" width="16" height="16" viewBox="0 0 16 16"><path d="M1.9 8.6A6 6 0 1 1 8.6 13.6" fill="none" stroke="#c0c0c0" stroke-width="1.9"/><path d="M7.4 3.8L7.9 13.8L5.7 11.8L4.3 14.7L2.8 13.9L4.2 11L1.3 10.5Z" fill="#c0c0c0"/></svg>
<div style="left:303px;top:921px;width:1599px;height:1px;background:#ddd;"></div>
<div style="left:303px;top:922px;width:1599px;height:1px;background:#fff;"></div>
</body></html>
